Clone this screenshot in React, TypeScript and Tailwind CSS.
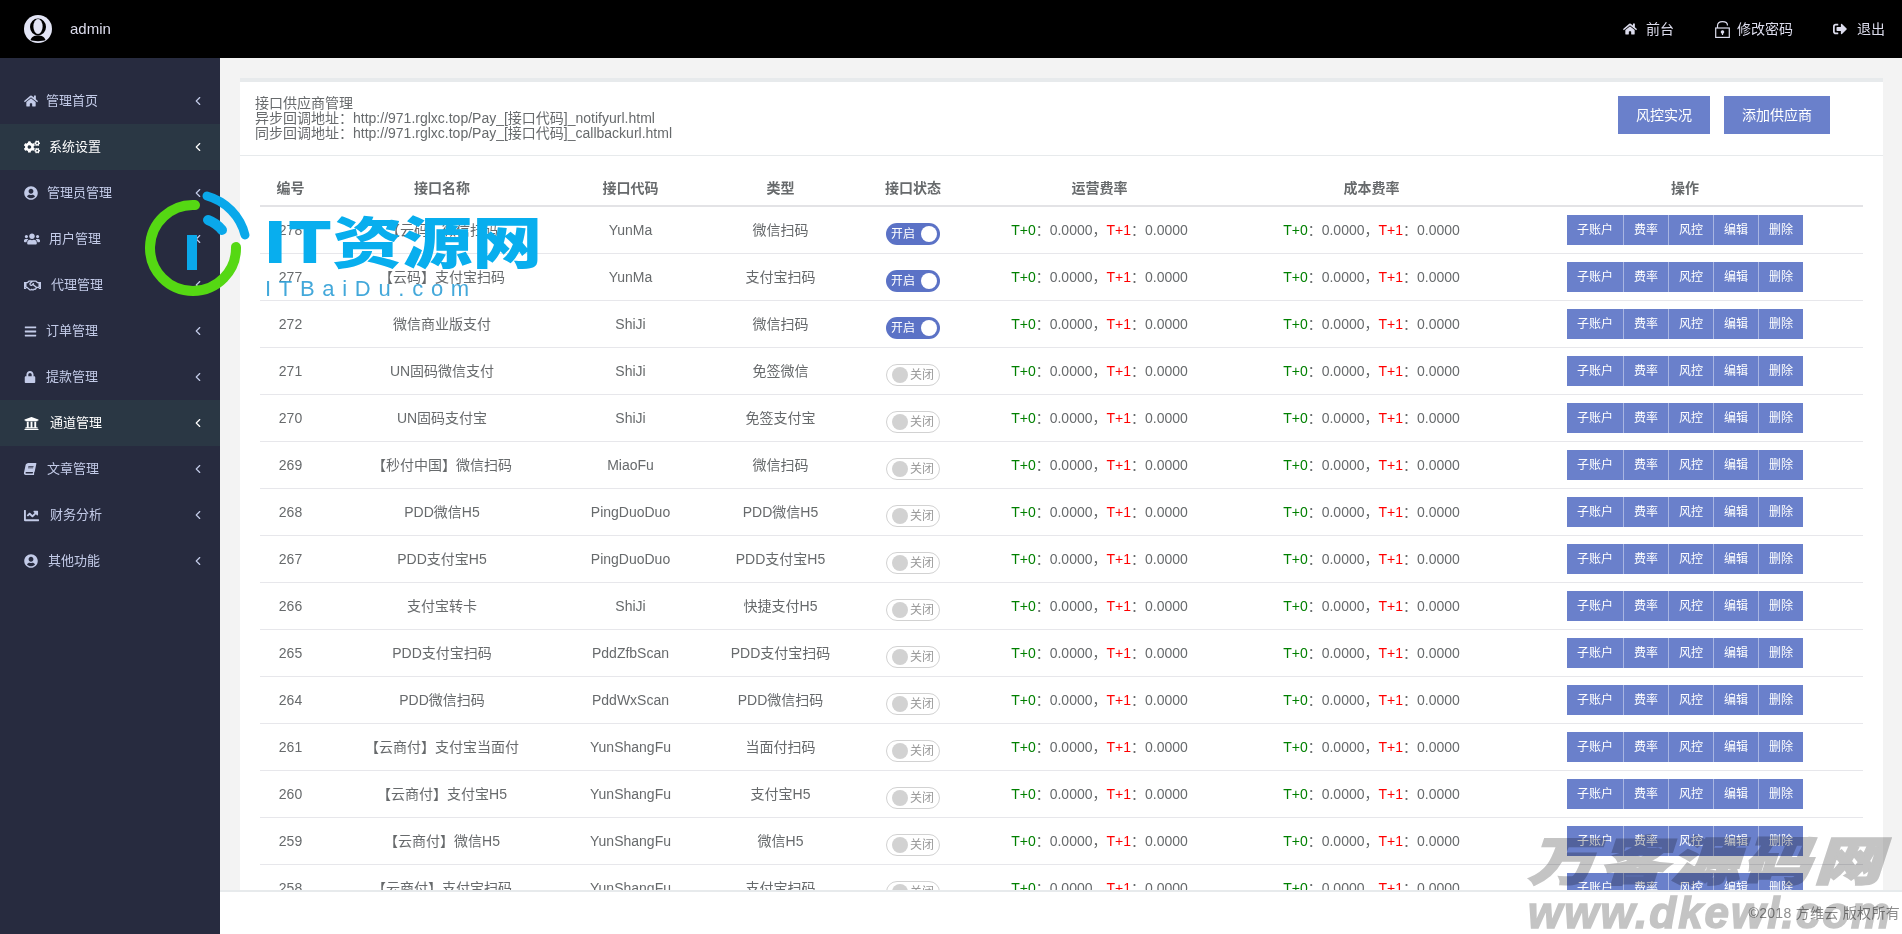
import { ChevronLeft } from "lucide-react";
import {
  FaBars,
  FaBook,
  FaChartLine,
  FaCogs,
  FaHome,
  FaLock,
  FaRegHandshake,
  FaSignOutAlt,
  FaUniversity,
  FaUserCircle,
  FaUsers,
} from "react-icons/fa";

const menu = [
  { label: "管理首页", icon: <FaHome size={14} />, box: "w-[22px]" },
  { label: "系统设置", icon: <FaCogs size={16} />, box: "w-[25px]", active: true },
  { label: "管理员管理", icon: <FaUserCircle size={14} />, box: "w-[23px]" },
  { label: "用户管理", icon: <FaUsers size={16} />, box: "w-[25px]" },
  { label: "代理管理", icon: <FaRegHandshake size={17} />, box: "w-[27px]" },
  { label: "订单管理", icon: <FaBars size={13} />, box: "w-[22px]" },
  { label: "提款管理", icon: <FaLock size={12} />, box: "w-[22px]" },
  { label: "通道管理", icon: <FaUniversity size={15} />, box: "w-[26px]", active: true },
  { label: "文章管理", icon: <FaBook size={12} className="-skew-x-12" />, box: "w-[23px]" },
  { label: "财务分析", icon: <FaChartLine size={15} />, box: "w-[26px]" },
  { label: "其他功能", icon: <FaUserCircle size={14} />, box: "w-[24px]" },
];

const rows = [
  { id: 278, name: "【云码】微信扫码", code: "YunMa", type: "微信扫码", on: true },
  { id: 277, name: "【云码】支付宝扫码", code: "YunMa", type: "支付宝扫码", on: true },
  { id: 272, name: "微信商业版支付", code: "ShiJi", type: "微信扫码", on: true },
  { id: 271, name: "UN固码微信支付", code: "ShiJi", type: "免签微信", on: false },
  { id: 270, name: "UN固码支付宝", code: "ShiJi", type: "免签支付宝", on: false },
  { id: 269, name: "【秒付中国】微信扫码", code: "MiaoFu", type: "微信扫码", on: false },
  { id: 268, name: "PDD微信H5", code: "PingDuoDuo", type: "PDD微信H5", on: false },
  { id: 267, name: "PDD支付宝H5", code: "PingDuoDuo", type: "PDD支付宝H5", on: false },
  { id: 266, name: "支付宝转卡", code: "ShiJi", type: "快捷支付H5", on: false },
  { id: 265, name: "PDD支付宝扫码", code: "PddZfbScan", type: "PDD支付宝扫码", on: false },
  { id: 264, name: "PDD微信扫码", code: "PddWxScan", type: "PDD微信扫码", on: false },
  { id: 261, name: "【云商付】支付宝当面付", code: "YunShangFu", type: "当面付扫码", on: false },
  { id: 260, name: "【云商付】支付宝H5", code: "YunShangFu", type: "支付宝H5", on: false },
  { id: 259, name: "【云商付】微信H5", code: "YunShangFu", type: "微信H5", on: false },
  { id: 258, name: "【云商付】支付宝扫码", code: "YunShangFu", type: "支付宝扫码", on: false },
];

const actions = ["子账户", "费率", "风控", "编辑", "删除"];

const Rate = () => (
  <span>
    <span className="text-[#008000]">T+0</span>：0.0000，<span className="text-[#ff0000]">T+1</span>：0.0000
  </span>
);

const Switch = ({ on }: { on: boolean }) =>
  on ? (
    <div className="mx-auto mt-2 flex h-[22px] w-[54px] items-center justify-between rounded-full bg-[#5b72c6] pl-[5px] pr-[3px] text-xs text-white">
      <span>开启</span>
      <span className="h-4 w-4 rounded-full bg-white" />
    </div>
  ) : (
    <div className="mx-auto mt-2 flex h-[22px] w-[54px] items-center justify-between rounded-full border border-[#d2d2d2] bg-white pl-[5px] pr-[5px] text-xs text-[#999999]">
      <span className="h-4 w-4 rounded-full bg-[#d2d2d2]" />
      <span>关闭</span>
    </div>
  );

const Avatar = () => (
  <svg width="28" height="28" viewBox="0 0 28 28">
    <circle cx="14" cy="14" r="14" fill="#e3e5f6" />
    <ellipse cx="14" cy="12" rx="8" ry="8.5" fill="#000" />
    <ellipse cx="14" cy="11.5" rx="4.6" ry="7.4" fill="#e3e5f6" />
    <path d="M6.5 25 C8 21.5 10 20.5 14 20.5 C18 20.5 20 21.5 21.5 25 C19 26.5 9 26.5 6.5 25 Z" fill="#000" />
  </svg>
);

const OpenLock = () => (
  <svg width="15" height="17" viewBox="0 0 15 17" fill="none" stroke="#dcdcec" strokeWidth="1.2">
    <rect x="0.7" y="7" width="13.6" height="9.4" />
    <path d="M2.5 7 V4.8 C2.5 2.2 4.5 0.7 7.5 0.7 C10.5 0.7 12.5 2.2 12.5 4.4" />
    <circle cx="7.5" cy="11" r="1.2" fill="#dcdcec" />
    <path d="M7.5 11 V14" />
  </svg>
);

export default function App() {
  return (
    <div className="relative flex h-[934px] flex-col overflow-hidden bg-white font-['Liberation_Sans','Noto_Sans_CJK_SC',sans-serif] text-sm text-[#676a6c]">
      <header className="flex h-[58px] shrink-0 items-center justify-between bg-black text-[#dcdcec]">
        <div className="flex items-center pl-6">
          <Avatar />
          <span className="ml-[18px] text-[15px]">admin</span>
        </div>
        <div className="flex items-center pr-[17px]">
          <FaHome size={14} />
          <span className="ml-[9px]">前台</span>
          <span className="ml-[41px]">
            <OpenLock />
          </span>
          <span className="ml-[7px]">修改密码</span>
          <span className="ml-10">
            <FaSignOutAlt size={14} />
          </span>
          <span className="ml-[10px]">退出</span>
        </div>
      </header>

      <div className="flex min-h-0 flex-1">
        <aside className="w-[220px] shrink-0 bg-[#272b3f] pt-5 text-[13px]">
          {menu.map((item) => (
            <div
              key={item.label}
              className={
                item.active
                  ? "flex h-[46px] items-center bg-[#2a3744] pl-6 pr-[15px] text-white"
                  : "flex h-[46px] items-center pl-6 pr-[15px] text-[#c3cbe8]"
              }
            >
              <span className={`${item.box} shrink-0`}>{item.icon}</span>
              <span className="flex-1">{item.label}</span>
              <ChevronLeft size={14} strokeWidth={2} />
            </div>
          ))}
        </aside>

        <div className="flex min-w-0 flex-1 flex-col">
          <main className="min-h-0 flex-1 overflow-hidden bg-[#f3f3f3] pl-5 pr-[19px] pt-5">
            <section className="border-t-4 border-[#e7eaec] bg-white">
              <div className="flex h-[74px] items-start justify-between border-b-[1px] border-[#e7eaec] pl-[15px] pr-[53px] pt-[14px]">
                <div className="leading-[15px]">
                  <div>接口供应商管理</div>
                  <div>异步回调地址：http://971.rglxc.top/Pay_[接口代码]_notifyurl.html</div>
                  <div>同步回调地址：http://971.rglxc.top/Pay_[接口代码]_callbackurl.html</div>
                </div>
                <div className="flex gap-[14px]">
                  <button className="h-[38px] w-[92px] bg-[#6a80cb] text-white">风控实况</button>
                  <button className="h-[38px] w-[106px] bg-[#6a80cb] text-white">添加供应商</button>
                </div>
              </div>
              <div className="px-5 pt-[14px]">
                <table className="w-full table-fixed border-separate border-spacing-0 text-center">
                  <colgroup>
                    <col className="w-[61px]" />
                    <col className="w-[242px]" />
                    <col className="w-[135px]" />
                    <col className="w-[165px]" />
                    <col className="w-[100px]" />
                    <col className="w-[273px]" />
                    <col className="w-[271px]" />
                    <col />
                  </colgroup>
                  <thead>
                    <tr>
                      {["编号", "接口名称", "接口代码", "类型", "接口状态", "运营费率", "成本费率", "操作"].map((h) => (
                        <th key={h} className="h-[37px] border-b-2 border-[#e3e3e6] font-bold">
                          {h}
                        </th>
                      ))}
                    </tr>
                  </thead>
                  <tbody>
                    {rows.map((r) => (
                      <tr key={r.id}>
                        <td className="h-[47px] border-b border-[#e7e7eb]">{r.id}</td>
                        <td className="border-b border-[#e7e7eb]">{r.name}</td>
                        <td className="border-b border-[#e7e7eb]">{r.code}</td>
                        <td className="border-b border-[#e7e7eb]">{r.type}</td>
                        <td className="border-b border-[#e7e7eb]">
                          <Switch on={r.on} />
                        </td>
                        <td className="border-b border-[#e7e7eb]">
                          <Rate />
                        </td>
                        <td className="border-b border-[#e7e7eb]">
                          <Rate />
                        </td>
                        <td className="border-b border-[#e7e7eb]">
                          <div className="flex justify-center">
                            {actions.map((a, i) => (
                              <button
                                key={a}
                                className={
                                  i === 0
                                    ? "h-[30px] bg-[#6a80cb] px-[10px] text-xs text-white"
                                    : "h-[30px] border-l border-[#a9b6e2] bg-[#6a80cb] px-[10px] text-xs text-white"
                                }
                              >
                                {a}
                              </button>
                            ))}
                          </div>
                        </td>
                      </tr>
                    ))}
                  </tbody>
                </table>
              </div>
            </section>
          </main>
          <footer className="flex h-[44px] shrink-0 items-center justify-end border-t-2 border-[#e7eaec] bg-white pr-[2px] tracking-[0.3px] text-[#8d8d8d]">
            ©2018 方维云 版权所有
          </footer>
        </div>
      </div>

      {/* IT资源网 watermark */}
      <svg className="absolute left-[140px] top-[180px]" width="120" height="120" viewBox="0 0 120 120" fill="none" strokeLinecap="round">
        <path d="M55 25 A43 43 0 1 0 96 67" stroke="#55d813" strokeWidth="10" />
        <path d="M67 16 A54 54 0 0 1 105 55" stroke="#0aa8ea" strokeWidth="9" />
        <path d="M68 40 A33 33 0 0 1 82 50" stroke="#0aa8ea" strokeWidth="10" />
        <rect x="47" y="55" width="10" height="35" fill="#0aa8ea" />
      </svg>
      <div className="absolute left-[263px] top-[199px] origin-left scale-x-[1.25] whitespace-nowrap font-['Noto_Sans_CJK_SC',sans-serif] text-[56px] font-black leading-[80px] text-[#08aeee]">
        IT资源网
      </div>
      <div className="absolute left-[265px] top-[275px] whitespace-nowrap text-[22px] leading-[28px] tracking-[7.7px] text-[#2f9fd6]/90">
        ITBaiDu.com
      </div>

      {/* 万客源码网 watermark */}
      <div className="absolute left-[1528px] top-[816px] origin-left scale-x-[1.3] whitespace-nowrap font-['Noto_Sans_CJK_SC',sans-serif] text-[52px] font-black italic leading-[84px] tracking-[3px] text-[#c4c4c4] mix-blend-multiply [-webkit-text-stroke:2px_#c4c4c4]">
        万客源码网
      </div>
      <div className="absolute left-[1528px] top-[888px] whitespace-nowrap text-[44px] font-bold italic leading-[50px] tracking-[2px] text-[#c4c4c4] mix-blend-multiply [-webkit-text-stroke:1.5px_#c4c4c4]">
        www.dkewl.com
      </div>
    </div>
  );
}
